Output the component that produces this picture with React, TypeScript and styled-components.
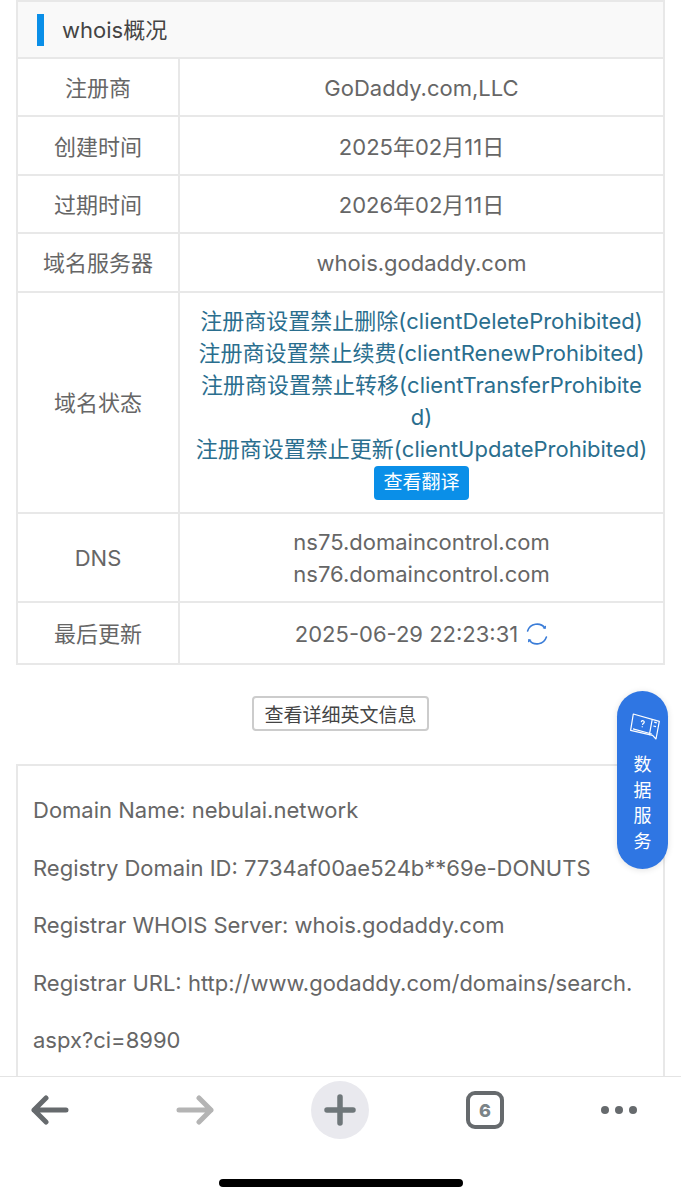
import React, { FunctionComponent } from 'react';
import styled, { createGlobalStyle } from 'styled-components';

interface InfoRow {
  label: string;
  value: string;
}

const GlobalStyle = createGlobalStyle`
  html, body {
    margin: 0;
    padding: 0;
    background: #fff;
    font-family: 'Inter', 'Noto Sans CJK SC', sans-serif;
  }
`;

const Screen = styled.div`
  width: 681px;
  height: 1200px;
  display: flex;
  flex-direction: column;
  position: relative;
  overflow: hidden;
  background: #fff;
`;

const Content = styled.main`
  flex: 1;
  min-height: 0;
  overflow: hidden;
  padding: 0 16px;
`;

const Table = styled.section`
  width: 649px;
  box-sizing: border-box;
  border: 2px solid #e8e8e8;
`;

const TableHead = styled.h2`
  margin: 0;
  height: 55px;
  display: flex;
  align-items: center;
  gap: 18px;
  padding-left: 19px;
  background: #f9f9f9;
  font-size: 22px;
  line-height: 32px;
  font-weight: 400;
  color: #444;
`;

const HeadMark = styled.span`
  width: 7px;
  height: 32px;
  background: #0a8fe8;
`;

const Row = styled.div<{ height: number }>`
  display: grid;
  grid-template-columns: 162px 1fr;
  min-height: ${({ height }) => height}px;
  border-top: 2px solid #e8e8e8;
`;

const LabelCell = styled.div`
  display: flex;
  align-items: center;
  justify-content: center;
  padding-top: 2px;
  border-right: 2px solid #e8e8e8;
  font-size: 22px;
  line-height: 32px;
  color: #666;
`;

const ValueCell = styled.div`
  display: flex;
  flex-direction: column;
  align-items: center;
  justify-content: center;
  min-width: 0;
  padding: 2px 14px 0;
  font-size: 22px;
  line-height: 32px;
  color: #666;
  text-align: center;
  word-break: break-all;
`;

const StatusCell = styled(ValueCell)`
  padding-top: 0;
`;

const StatusLink = styled.a`
  color: #2a6e8e;
  text-decoration: none;
`;

const TranslateButton = styled.button`
  width: 95px;
  height: 34px;
  margin-top: 1px;
  padding: 0;
  border: 0;
  border-radius: 4px;
  background: #0a8fe8;
  color: #fff;
  font: inherit;
  font-size: 19px;
  white-space: nowrap;
`;

const UpdatedLine = styled.div`
  display: flex;
  align-items: center;
  gap: 8px;
`;

const DetailWrap = styled.div`
  display: flex;
  justify-content: center;
  padding: 31px 0 33px;
`;

const DetailButton = styled.button`
  width: 177px;
  height: 35px;
  padding: 0;
  border: 2px solid #ccc;
  border-radius: 4px;
  background: #fff;
  color: #444;
  font: inherit;
  font-size: 19px;
  white-space: nowrap;
`;

const RawBox = styled.section`
  width: 649px;
  box-sizing: border-box;
  min-height: 330px;
  padding: 16px 15px 0;
  border: 2px solid #e8e8e8;
  border-bottom: 0;
  font-size: 22px;
  line-height: 57.6px;
  color: #666;
`;

const RawLine = styled.div``;

const FloatButton = styled.aside`
  position: absolute;
  left: 617px;
  top: 691px;
  width: 51px;
  height: 178px;
  box-sizing: border-box;
  padding-top: 22px;
  display: flex;
  flex-direction: column;
  align-items: center;
  border-radius: 26px;
  background: #2f76e3;
  box-shadow: 0 1px 6px rgba(0, 0, 0, 0.12);
  color: #fff;
  font-size: 18px;
  line-height: 25.7px;
`;

const FloatIconWrap = styled.div`
  height: 27px;
  margin-left: 4px;
`;

const FloatText = styled.div`
  width: 20px;
  margin-top: 12px;
  text-align: center;
`;

const BottomBar = styled.nav`
  height: 103px;
  flex: none;
  box-sizing: border-box;
  padding-top: 4px;
  border-top: 1px solid #e4e4e4;
  display: grid;
  grid-template-columns: 100px 190px 100px 190px 78px;
  grid-template-rows: 58px;
  align-items: center;
  justify-items: center;
  background: #fff;
`;

const PlusCircle = styled.div`
  width: 58px;
  height: 58px;
  border-radius: 50%;
  background: #e9e9ee;
  display: flex;
  align-items: center;
  justify-content: center;
`;

const TabCount = styled.div`
  width: 38px;
  height: 38px;
  box-sizing: border-box;
  border: 4px solid #666a6d;
  border-radius: 9px;
  display: flex;
  align-items: center;
  justify-content: center;
  color: #7b8487;
  font-size: 18px;
  font-weight: 800;
`;

const HomeZone = styled.div`
  height: 21px;
  flex: none;
  display: flex;
  justify-content: center;
  background: #fff;
`;

const HomeBar = styled.div`
  width: 244px;
  height: 8px;
  border-radius: 4px;
  background: #000;
`;

const rows: InfoRow[] = [
  { label: '注册商', value: 'GoDaddy.com,LLC' },
  { label: '创建时间', value: '2025年02月11日' },
  { label: '过期时间', value: '2026年02月11日' },
  { label: '域名服务器', value: 'whois.godaddy.com' },
];

const statuses = [
  '注册商设置禁止删除(clientDeleteProhibited)',
  '注册商设置禁止续费(clientRenewProhibited)',
  '注册商设置禁止转移(clientTransferProhibited)',
  '注册商设置禁止更新(clientUpdateProhibited)',
];

const Spinner = () => (
  <svg width="22" height="22" viewBox="0 0 22 22" fill="none" stroke="#3b7dd8" strokeWidth="1.6" strokeLinecap="round">
    <path d="M1.6 8A10 10 0 0 1 19 5" />
    <path d="M20.4 14A10 10 0 0 1 3 17" />
    <path d="M19.4 3.4 19 5l-1.6-.2" strokeWidth="1.3" />
    <path d="M2.6 18.6 3 17l1.6.2" strokeWidth="1.3" />
  </svg>
);

const BookIcon = () => (
  <svg width="30" height="27" viewBox="0 0 30 27" fill="none" stroke="#fff" strokeWidth="1.2" strokeLinejoin="round">
    <path d="M3.3 1l26 7.3L26 26l-3.4-3.6L.6 17.3z" />
    <path d="M3 15.8l18.8 5.2M22.3 6l-3 16.2" />
    <path d="M24.2 9.2l2.6.7M23.4 13l2.6.7" />
    <path d="M11.4 8.6c.5-1.5 3.2-.9 2.8.7-.2 1-1.3 1-1.6 2.2M12.2 13.6v.2" strokeWidth="1.2" strokeLinecap="round" />
  </svg>
);

const BackIcon = () => (
  <svg width="38" height="30" viewBox="0 0 38 30" fill="none" stroke="#666a6d" strokeWidth="5" strokeLinecap="round" strokeLinejoin="round">
    <path d="M35 15H3M15 3 3 15l12 12" />
  </svg>
);

const ForwardIcon = () => (
  <svg width="38" height="30" viewBox="0 0 38 30" fill="none" stroke="#b4b4b4" strokeWidth="5" strokeLinecap="round" strokeLinejoin="round">
    <path d="M3 15h32M23 3l12 12-12 12" />
  </svg>
);

const PlusIcon = () => (
  <svg width="32" height="32" viewBox="0 0 32 32" fill="none" stroke="#6f777a" strokeWidth="5.5" strokeLinecap="round">
    <path d="M16 3v26M3 16h26" />
  </svg>
);

const MoreIcon = () => (
  <svg width="38" height="10" viewBox="0 0 38 10" fill="#666a6d">
    <circle cx="5" cy="5" r="4" />
    <circle cx="19" cy="5" r="4" />
    <circle cx="33" cy="5" r="4" />
  </svg>
);

const App: FunctionComponent = () => (
  <Screen>
    <GlobalStyle />
    <Content>
      <Table>
        <TableHead>
          <HeadMark />
          whois概况
        </TableHead>
        {rows.map(row => (
          <Row key={row.label} height={56.4}>
            <LabelCell>{row.label}</LabelCell>
            <ValueCell>{row.value}</ValueCell>
          </Row>
        ))}
        <Row height={219.4}>
          <LabelCell>域名状态</LabelCell>
          <StatusCell>
            {statuses.map(status => (
              <StatusLink key={status}>{status}</StatusLink>
            ))}
            <TranslateButton>查看翻译</TranslateButton>
          </StatusCell>
        </Row>
        <Row height={87}>
          <LabelCell>DNS</LabelCell>
          <ValueCell>
            <div>ns75.domaincontrol.com</div>
            <div>ns76.domaincontrol.com</div>
          </ValueCell>
        </Row>
        <Row height={60}>
          <LabelCell>最后更新</LabelCell>
          <ValueCell>
            <UpdatedLine>
              2025-06-29 22:23:31
              <Spinner />
            </UpdatedLine>
          </ValueCell>
        </Row>
      </Table>
      <DetailWrap>
        <DetailButton>查看详细英文信息</DetailButton>
      </DetailWrap>
      <RawBox>
        <RawLine>Domain Name: nebulai.network</RawLine>
        <RawLine>Registry Domain ID: 7734af00ae524b**69e-DONUTS</RawLine>
        <RawLine>Registrar WHOIS Server: whois.godaddy.com</RawLine>
        <RawLine>
          Registrar URL: http://www.godaddy.com/domains/search.
          <wbr />
          aspx?ci=8990
        </RawLine>
      </RawBox>
    </Content>
    <FloatButton>
      <FloatIconWrap>
        <BookIcon />
      </FloatIconWrap>
      <FloatText>数据服务</FloatText>
    </FloatButton>
    <BottomBar>
      <BackIcon />
      <ForwardIcon />
      <PlusCircle>
        <PlusIcon />
      </PlusCircle>
      <TabCount>6</TabCount>
      <MoreIcon />
    </BottomBar>
    <HomeZone>
      <HomeBar />
    </HomeZone>
  </Screen>
);

export default App;
